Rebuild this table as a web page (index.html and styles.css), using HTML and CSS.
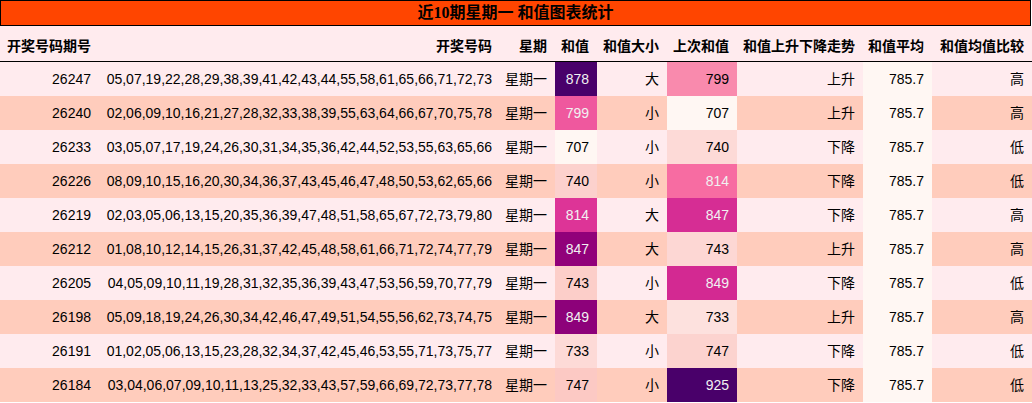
FILE: index.html
```html
<!DOCTYPE html>
<html lang="zh-CN">
<head>
<meta charset="utf-8">
<title>近10期星期一 和值图表统计</title>
<link rel="stylesheet" href="styles.css">
</head>
<body>
<div class="title">近10期星期一 和值图表统计</div>
<table class="stats">
  <colgroup>
    <col class="c-idx"><col class="c-nums"><col class="c-week"><col class="c-sum"><col class="c-size"><col class="c-prev"><col class="c-trend"><col class="c-avg"><col class="c-cmp">
  </colgroup>
  <thead>
    <tr><th>开奖号码期号</th><th>开奖号码</th><th>星期</th><th>和值</th><th>和值大小</th><th>上次和值</th><th>和值上升下降走势</th><th>和值平均</th><th>和值均值比较</th></tr>
  </thead>
  <tbody>
    <tr><td>26247</td><td>05,07,19,22,28,29,38,39,41,42,43,44,55,58,61,65,66,71,72,73</td><td>星期一</td><td class="lt" style="background-color:#49006a">878</td><td>大</td><td style="background-color:rgb(249,138,173)">799</td><td>上升</td><td class="avg">785.7</td><td>高</td></tr>
    <tr><td>26240</td><td>02,06,09,10,16,21,27,28,32,33,38,39,55,63,64,66,67,70,75,78</td><td>星期一</td><td class="lt" style="background-color:rgb(239,88,158)">799</td><td>小</td><td style="background-color:#fff7f3">707</td><td>上升</td><td class="avg">785.7</td><td>高</td></tr>
    <tr><td>26233</td><td>03,05,07,17,19,24,26,30,31,34,35,36,42,44,52,53,55,63,65,66</td><td>星期一</td><td style="background-color:#fff7f3">707</td><td>小</td><td style="background-color:rgb(253,218,215)">740</td><td>下降</td><td class="avg">785.7</td><td>低</td></tr>
    <tr><td>26226</td><td>08,09,10,15,16,20,30,34,36,37,43,45,46,47,48,50,53,62,65,66</td><td>星期一</td><td style="background-color:rgb(252,209,205)">740</td><td>小</td><td class="lt" style="background-color:rgb(247,108,162)">814</td><td>下降</td><td class="avg">785.7</td><td>低</td></tr>
    <tr><td>26219</td><td>02,03,05,06,13,15,20,35,36,39,47,48,51,58,65,67,72,73,79,80</td><td>星期一</td><td class="lt" style="background-color:rgb(221,52,151)">814</td><td>大</td><td class="lt" style="background-color:rgb(214,45,148)">847</td><td>下降</td><td class="avg">785.7</td><td>高</td></tr>
    <tr><td>26212</td><td>01,08,10,12,14,15,26,31,37,42,45,48,58,61,66,71,72,74,77,79</td><td>星期一</td><td class="lt" style="background-color:rgb(145,1,122)">847</td><td>大</td><td style="background-color:rgb(253,215,212)">743</td><td>上升</td><td class="avg">785.7</td><td>高</td></tr>
    <tr><td>26205</td><td>04,05,09,10,11,19,28,31,32,35,36,39,43,47,53,56,59,70,77,79</td><td>星期一</td><td style="background-color:rgb(252,206,201)">743</td><td>小</td><td class="lt" style="background-color:rgb(211,41,146)">849</td><td>下降</td><td class="avg">785.7</td><td>低</td></tr>
    <tr><td>26198</td><td>05,09,18,19,24,26,30,34,42,46,47,49,51,54,55,56,62,73,74,75</td><td>星期一</td><td class="lt" style="background-color:rgb(141,1,122)">849</td><td>大</td><td style="background-color:rgb(253,225,222)">733</td><td>上升</td><td class="avg">785.7</td><td>高</td></tr>
    <tr><td>26191</td><td>01,02,05,06,13,15,23,28,32,34,37,42,45,46,53,55,71,73,75,77</td><td>星期一</td><td style="background-color:rgb(253,218,215)">733</td><td>小</td><td style="background-color:rgb(252,211,207)">747</td><td>下降</td><td class="avg">785.7</td><td>低</td></tr>
    <tr><td>26184</td><td>03,04,06,07,09,10,11,13,25,32,33,43,57,59,66,69,72,73,77,78</td><td>星期一</td><td style="background-color:rgb(252,201,196)">747</td><td>小</td><td class="lt" style="background-color:#49006a">925</td><td>下降</td><td class="avg">785.7</td><td>低</td></tr>
  </tbody>
</table>
</body>
</html>
```
FILE: styles.css
```css
html, body {
  margin: 0;
  padding: 0;
  background: #ffffff;
}

body {
  font-family: "Liberation Sans", "Noto Sans CJK SC", sans-serif;
  font-size: 14px;
  color: #000000;
}

.title {
  box-sizing: border-box;
  width: 1031px;
  height: 26px;
  border: 1px solid #000000;
  background: #ff4500;
  text-align: center;
  font-family: "Liberation Serif", "Noto Sans CJK SC", serif;
  font-weight: bold;
  font-size: 16px;
  line-height: 24px;
}

.stats {
  border-collapse: collapse;
  border-spacing: 0;
  table-layout: fixed;
  width: 1032px;
}

.c-idx { width: 99px; }
.c-nums { width: 401px; }
.c-week { width: 55px; }
.c-sum { width: 42px; }
.c-size { width: 70px; }
.c-prev { width: 70px; }
.c-trend { width: 126px; }
.c-avg { width: 69px; }
.c-cmp { width: 100px; }

.stats th,
.stats td {
  padding: 7px 8px 7px 0;
  text-align: right;
  line-height: 20px;
  white-space: nowrap;
  overflow: hidden;
}

.stats thead th {
  padding-top: 10px;
  padding-bottom: 5px;
  background: #ffebee;
  font-weight: bold;
  border-bottom: 1px solid #000000;
}

.stats tbody tr:nth-child(odd) {
  background: #ffebee;
}

.stats tbody tr:nth-child(even) {
  background: #ffccbc;
}

.stats td.avg {
  background: #fff7f3;
}

.stats td.lt {
  color: #f1f1f1;
}
```
